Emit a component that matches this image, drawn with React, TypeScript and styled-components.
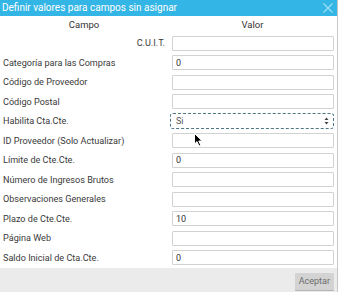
import { Fragment } from "react";
import styled, { createGlobalStyle } from "styled-components";

const GlobalStyle = createGlobalStyle`
  html, body {
    margin: 0;
    padding: 0;
    background: #ffffff;
  }
  body {
    font-family: Roboto, "Liberation Sans", sans-serif;
  }
`;

const Dialog = styled.div`
  position: relative;
  width: 337px;
  height: 292px;
  border-right: 1px solid #c8c8c8;
  display: flex;
  flex-direction: column;
  background: #fff;
  overflow: hidden;
`;

const TitleBar = styled.div`
  height: 16px;
  background: #33b5e5;
  color: #fff;
  display: flex;
  align-items: center;
  justify-content: space-between;
  padding: 0 4px 0 2px;
  font-size: 10px;
  line-height: 16px;
`;

const CloseButton = styled.button`
  border: 0;
  background: transparent;
  padding: 0;
  width: 10px;
  height: 10px;
  display: flex;
  align-items: center;
  justify-content: center;
  cursor: pointer;
`;

const Body = styled.div`
  flex: 1;
  display: grid;
  grid-template-columns: 168px 1fr;
  grid-template-rows: 17.5px;
  grid-auto-rows: 19.5px;
  align-items: center;
`;

const HeaderCell = styled.div`
  text-align: center;
  font-size: 9.5px;
  color: #333;
`;

const Label = styled.div<{ $right?: boolean }>`
  font-size: 9.1px;
  color: #3a3a3a;
  padding: 0 3px;
  text-align: ${(p) => (p.$right ? "right" : "left")};
  white-space: nowrap;
`;

const ValueCell = styled.div`
  padding: 0 3px 0 4px;
  display: flex;
  align-items: center;
`;

const Input = styled.input`
  box-sizing: border-box;
  width: 100%;
  height: 15px;
  border: 1px solid #d2d2d2;
  border-radius: 1px;
  padding: 0 3px;
  font-family: Roboto, "Liberation Sans", sans-serif;
  font-size: 9px;
  color: #333;
  background: #fff;
  outline: none;
`;

const SelectBox = styled.div`
  box-sizing: border-box;
  width: calc(100% + 3px);
  margin-left: -2px;
  height: 16px;
  border: 1px dashed #4d7784;
  border-radius: 3px;
  display: flex;
  align-items: center;
  justify-content: space-between;
  padding: 0 4px 0 5px;
  font-size: 9px;
  color: #555;
  background: #fff;
`;

const Footer = styled.div`
  height: 24px;
  background: #ebebeb;
  display: flex;
  align-items: center;
  justify-content: flex-end;
  padding: 0 3px 0 0;
`;

const AcceptButton = styled.button`
  height: 17px;
  padding: 0 4px;
  border: 0;
  border-radius: 1px;
  background: #d3d3d3;
  box-shadow: 0 1px 0 #b5b5b5;
  color: #6d6d6d;
  font-family: Roboto, "Liberation Sans", sans-serif;
  font-size: 9px;
  margin-top: 2px;
`;

const Pointer = styled.div`
  position: absolute;
  left: 194px;
  top: 132px;
  width: 10px;
  height: 14px;
  pointer-events: none;
`;

type Field = { label: string; value?: string; select?: boolean; right?: boolean };

const fields: Field[] = [
  { label: "C.U.I.T.", value: "", right: true },
  { label: "Categoría para las Compras", value: "0" },
  { label: "Código de Proveedor", value: "" },
  { label: "Código Postal", value: "" },
  { label: "Habilita Cta.Cte.", select: true, value: "Si" },
  { label: "ID Proveedor (Solo Actualizar)", value: "" },
  { label: "Límite de Cte.Cte.", value: "0" },
  { label: "Número de Ingresos Brutos", value: "" },
  { label: "Observaciones Generales", value: "" },
  { label: "Plazo de Cte.Cte.", value: "10" },
  { label: "Página Web", value: "" },
  { label: "Saldo Inicial de Cta.Cte.", value: "0" },
];

export default function App() {
  return (
    <>
      <GlobalStyle />
      <Dialog>
        <TitleBar>
          <span>Definir valores para campos sin asignar</span>
          <CloseButton aria-label="Cerrar">
            <svg width="10" height="10" viewBox="0 0 10 10">
              <path d="M0.5 0.5 L9.5 9.5 M9.5 0.5 L0.5 9.5" stroke="#a6def3" strokeWidth="1.1" />
            </svg>
          </CloseButton>
        </TitleBar>
        <Body>
          <HeaderCell>Campo</HeaderCell>
          <HeaderCell>Valor</HeaderCell>
          {fields.map((f) => (
            <Fragment key={f.label}>
              <Label $right={f.right}>{f.label}</Label>
              <ValueCell>
                {f.select ? (
                  <SelectBox>
                    <span>{f.value}</span>
                    <svg width="5" height="8" viewBox="0 0 5 8">
                      <path d="M2.5 0.5 L4.5 3 L0.5 3 Z M2.5 7.5 L4.5 5 L0.5 5 Z" fill="#444" />
                    </svg>
                  </SelectBox>
                ) : (
                  <Input defaultValue={f.value} />
                )}
              </ValueCell>
            </Fragment>
          ))}
        </Body>
        <Footer>
          <AcceptButton>Aceptar</AcceptButton>
        </Footer>
        <Pointer>
          <svg width="10" height="14" viewBox="0 0 10 14">
            <path d="M0.5 0.5 L0.5 11 L3 8.6 L5 13 L6.8 12.2 L4.8 8 L8.2 8 Z" fill="#000" stroke="#fff" strokeWidth="1" />
          </svg>
        </Pointer>
      </Dialog>
    </>
  );
}
